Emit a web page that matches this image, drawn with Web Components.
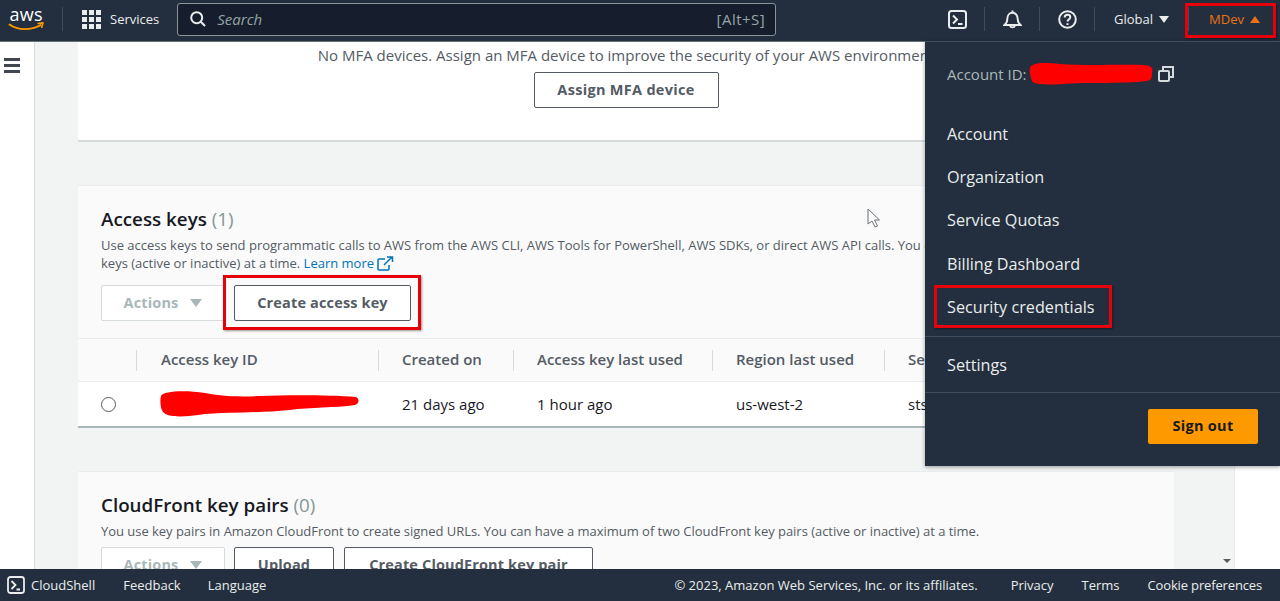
<!DOCTYPE html>
<html lang="en">
<head>
<meta charset="utf-8">
<title>Security credentials</title>
<style>
  html, body { margin: 0; height: 601px; overflow: hidden; background: #fff; }
  body { font-family: "Open Sans", "Liberation Sans", sans-serif; }
</style>
</head>
<body>
<console-page></console-page>

<script>
const FONT = '"Open Sans", "Liberation Sans", sans-serif';

class AwsButton extends HTMLElement {
  constructor() {
    super();
    this.attachShadow({ mode: 'open' });
  }

  connectedCallback() {
    const caret = this.hasAttribute('caret') ? '<span class="caret"></span>' : '';
    this.shadowRoot.innerHTML = `
      <style>
        :host {
          display: inline-flex;
          box-sizing: border-box;
          height: 36px;
          align-items: center;
          justify-content: center;
          gap: 12px;
          padding: 0 10px;
          background: #fff;
          border: 1px solid #545b64;
          border-radius: 2px;
          color: #545b64;
          font: 700 14.5px/20px ${FONT};
          letter-spacing: .15px;
          white-space: nowrap;
        }
        :host([disabled]) { border-color: #d5dbdb; color: #aab7b8; }
        .caret {
          width: 0;
          height: 0;
          border-left: 6px solid transparent;
          border-right: 6px solid transparent;
          border-top: 8px solid currentColor;
        }
      </style>
      <slot></slot>${caret}
    `;
  }
}

class AwsNav extends HTMLElement {
  constructor() {
    super();
    this.attachShadow({ mode: 'open' });
  }

  connectedCallback() {
    this.shadowRoot.innerHTML = `
      <style>
        :host {
          display: flex;
          box-sizing: border-box;
          flex: none;
          height: 42px;
          align-items: center;
          padding-bottom: 3px;
          background: #232f3e;
          border-bottom: 1px solid #687078;
          color: #eaeded;
          font: 400 13px/20px ${FONT};
        }
        .logo { width: 37px; height: 24px; margin-left: 8px; flex: none; }
        .sep { width: 1px; height: 24px; background: #414d5c; flex: none; }
        .services { display: flex; align-items: center; gap: 9px; margin-left: 19px; }
        .search {
          display: flex;
          box-sizing: border-box;
          width: 599px;
          height: 33px;
          margin-left: 18px;
          padding: 0 10px 0 12px;
          align-items: center;
          gap: 11px;
          background: #161e2d;
          border: 1px solid #879596;
          border-radius: 3px;
        }
        .search i { flex: 1; color: #95a5a6; font-size: 15px; }
        .search span { color: #95a5a6; font-size: 15px; letter-spacing: .5px; }
        .tools { display: flex; align-items: center; margin-left: auto; height: 100%; }
        .tool { display: flex; justify-content: center; width: 54px; }
        .global { display: flex; box-sizing: border-box; align-items: center; gap: 6px; width: 93px; padding-left: 19px; }
        .mdev { display: flex; box-sizing: border-box; align-items: center; gap: 6px; width: 91px; padding-left: 20px; color: #ec7211; }
        .up, .down { width: 0; height: 0; border-left: 5px solid transparent; border-right: 5px solid transparent; }
        .up { border-bottom: 7px solid #ec7211; }
        .down { border-top: 7px solid #eaeded; }
      </style>
      <svg class="logo" viewBox="0 0 37 24" aria-hidden="true">
        <path d="M1.500 17.500c4.200 3 10 4.600 15 4.600 5.400 0 11.500-1.400 16-4" fill="none" stroke="#f90" stroke-width="1.900" stroke-linecap="round"/>
        <path d="M29.500 16.500l5.500-.6-1.400 5" fill="none" stroke="#f90" stroke-width="1.600" stroke-linejoin="round"/>
        <text x="1.500" y="14" fill="#fff" font-family="Open Sans, sans-serif" font-size="18" textLength="33">aws</text>
      </svg>
      <span class="sep" style="margin-left:17px"></span>
      <div class="services">
        <svg width="19" height="19" viewBox="0 0 19 19" fill="#eaeded" aria-hidden="true">
          <rect x="0" y="0" width="5" height="5"/><rect x="7" y="0" width="5" height="5"/><rect x="14" y="0" width="5" height="5"/>
          <rect x="0" y="7" width="5" height="5"/><rect x="7" y="7" width="5" height="5"/><rect x="14" y="7" width="5" height="5"/>
          <rect x="0" y="14" width="5" height="5"/><rect x="7" y="14" width="5" height="5"/><rect x="14" y="14" width="5" height="5"/>
        </svg>
        <span>Services</span>
      </div>
      <div class="search">
        <svg width="16" height="16" viewBox="0 0 16 16" fill="none" stroke="#eaeded" stroke-width="2" aria-hidden="true">
          <circle cx="6.700" cy="6.700" r="5.500"/><path d="M10.800 10.800L15 15"/>
        </svg>
        <i>Search</i>
        <span>[Alt+S]</span>
      </div>
      <div class="tools">
        <div class="tool">
          <svg width="19" height="19" viewBox="0 0 19 19" fill="none" stroke="#eaeded" stroke-width="2" aria-hidden="true">
            <rect x="1" y="1" width="17" height="17" rx="2.500"/><path d="M5 5.500l4 4-4 4M10 14h4.500"/>
          </svg>
        </div>
        <span class="sep"></span>
        <div class="tool">
          <svg width="19" height="19" viewBox="0 0 19 19" fill="none" stroke="#eaeded" stroke-width="1.900" aria-hidden="true">
            <path d="M1.500 15h16c-1.800-1.500-2.800-3-2.800-6 0-3.300-2-6.300-5.200-6.300S4.300 5.700 4.300 9c0 3-1 4.500-2.800 6z"/><path d="M7 15.500a2.600 2.600 0 0 0 5 0M9.500 .5v2"/>
          </svg>
        </div>
        <span class="sep"></span>
        <div class="tool">
          <svg width="19" height="19" viewBox="0 0 19 19" fill="none" stroke="#eaeded" stroke-width="2" aria-hidden="true">
            <circle cx="9.500" cy="9.500" r="8.300"/><path d="M6.700 7.400c0-1.600 1.200-2.600 2.800-2.600s2.800 1 2.800 2.400c0 2.200-2.800 2.200-2.800 4.300"/><path d="M9.500 13.200v1.800"/>
          </svg>
        </div>
        <span class="sep"></span>
        <div class="global"><span>Global</span><span class="down"></span></div>
        <span class="sep"></span>
        <div class="mdev"><span>MDev</span><span class="up"></span></div>
      </div>
    `;
  }
}

class AwsFooter extends HTMLElement {
  constructor() {
    super();
    this.attachShadow({ mode: 'open' });
  }

  connectedCallback() {
    this.shadowRoot.innerHTML = `
      <style>
        :host {
          display: flex;
          box-sizing: border-box;
          flex: none;
          height: 32px;
          align-items: center;
          padding: 0 18px 0 7px;
          background: #232f3e;
          color: #eaeded;
          font: 400 13px/20px ${FONT};
          position: relative;
        }
        .shell { display: flex; align-items: center; gap: 6px; margin-right: 28px; }
        .links { display: flex; gap: 27px; }
        .right { display: flex; margin-left: auto; gap: 28px; }
        .copy { margin-right: 5px; }
      </style>
      <div class="shell">
        <svg width="18" height="18" viewBox="0 0 18 18" fill="none" stroke="#eaeded" stroke-width="1.800" aria-hidden="true">
          <rect x="1" y="1" width="16" height="16" rx="2.500"/><path d="M4.500 5l4 4-4 4M9.500 13.500h3.500"/>
        </svg>
        <span>CloudShell</span>
      </div>
      <div class="links"><span>Feedback</span><span>Language</span></div>
      <div class="right">
        <span class="copy">© 2023, Amazon Web Services, Inc. or its affiliates.</span>
        <span>Privacy</span><span>Terms</span><span style="letter-spacing:-.15px">Cookie preferences</span>
      </div>
    `;
  }
}

class KeyTable extends HTMLElement {
  constructor() {
    super();
    this.attachShadow({ mode: 'open' });
  }

  connectedCallback() {
    this.shadowRoot.innerHTML = `
      <style>
        :host {
          display: block;
          margin-top: 17px;
          border-top: 1px solid #eaeded;
          border-bottom: 2px solid #aab7b8;
          color: #16191f;
          font: 400 15px/20px ${FONT};
        }
        .row { display: grid; grid-template-columns: 59px 242px 135px 199px 172px 1fr; }
        .head { height: 42px; background: #fafafa; border-bottom: 1px solid #eaeded; color: #545b64; font-weight: 600; }
        .body { height: 44px; background: #fff; }
        .cell { display: flex; align-items: center; padding-left: 23px; box-sizing: border-box; white-space: nowrap; overflow: hidden; position: relative; }
        .head .cell { padding-bottom: 2px; }
        .head .cell::after { content: ""; position: absolute; right: 0; top: 11px; height: 21px; width: 1px; background: #d5dbdb; }
        .head .cell:last-child::after { display: none; }
        .radio { width: 15px; height: 15px; box-sizing: border-box; border: 1px solid #545b64; border-radius: 50%; background: #fff; }
        .scribble { width: 200px; height: 28px; flex: none; }
      </style>
      <div class="row head">
        <div class="cell"></div>
        <div class="cell" style="padding-left:24px">Access key ID</div>
        <div class="cell">Created on</div>
        <div class="cell">Access key last used</div>
        <div class="cell">Region last used</div>
        <div class="cell">Service last used</div>
      </div>
      <div class="row body">
        <div class="cell"><span class="radio"></span></div>
        <div class="cell">
          <svg class="scribble" viewBox="0 0 200 28" aria-hidden="true">
            <path d="M1 6C3 1 25 0 45 3c15 3 30 4 55 3 30-1 70-1 96 1 4 2 3 7-1 8-20 3-45 2-65 5-30 3-60 2-85 4-20 3-37 4-42-2C0 18 0 10 1 6z" fill="#f00"/>
          </svg>
        </div>
        <div class="cell">21 days ago</div>
        <div class="cell">1 hour ago</div>
        <div class="cell">us-west-2</div>
        <div class="cell">sts.amazonaws.com</div>
      </div>
    `;
  }
}

class IamPanel extends HTMLElement {
  constructor() {
    super();
    this.attachShadow({ mode: 'open' });
  }

  connectedCallback() {
    this.shadowRoot.innerHTML = `
      <style>
        :host {
          display: block;
          background: #fafafa;
          border-top: 1px solid #eaeded;
          margin-bottom: 43px;
          padding-top: 21px;
          color: #545b64;
        }
        h2 { margin: 0 23px; color: #16191f; font: 600 18.800px/24px ${FONT}; }
        h2 span { color: #879596; font-weight: 400; }
        ::slotted(p) { margin: 0 23px; font: 400 13px/18px ${FONT}; color: #545b64; white-space: nowrap; }
        .desc { display: block; margin-top: 5px; }
        .actions { display: flex; gap: 9px; margin: var(--actions-top, 13px) 23px 0; }
      </style>
      <h2><slot name="title"></slot> <span><slot name="count"></slot></span></h2>
      <div class="desc"><slot></slot></div>
      <div class="actions"><slot name="actions"></slot></div>
      <slot name="table"></slot>
    `;
  }
}

class MfaPanel extends HTMLElement {
  constructor() {
    super();
    this.attachShadow({ mode: 'open' });
  }

  connectedCallback() {
    this.shadowRoot.innerHTML = `
      <style>
        :host {
          display: flex;
          box-sizing: border-box;
          height: 100px;
          flex-direction: column;
          align-items: center;
          gap: 7px;
          padding-top: 3px;
          margin-bottom: 43px;
          background: #fff;
          border-bottom: 2px solid #d5dbdb;
          color: #545b64;
          font: 400 15px/20px ${FONT};
          white-space: nowrap;
        }
      </style>
      <span>No MFA devices. Assign an MFA device to improve the security of your AWS environment</span>
      <slot></slot>
    `;
  }
}

class AccountMenu extends HTMLElement {
  constructor() {
    super();
    this.attachShadow({ mode: 'open' });
  }

  connectedCallback() {
    this.shadowRoot.innerHTML = `
      <style>
        :host {
          position: absolute;
          top: 41px;
          right: 0;
          width: 355px;
          height: 425px;
          box-sizing: border-box;
          background: #232f3e;
          border-top: 1px solid #414d5c;
          box-shadow: 0 1px 4px rgba(0, 0, 0, .4);
          color: #eaeded;
          font: 400 16.200px/20px ${FONT};
        }
        .account { display: flex; align-items: center; height: 64px; padding-left: 22px; color: #aab7b8; font-size: 15px; }
        .red { width: 124px; height: 24px; flex: none; margin: 0 5px 0 2px; }
        .group { padding: 6px 0 8px; border-bottom: 1px solid #414d5c; }
        .item { display: flex; align-items: center; height: 43.300px; padding-left: 22px; }
        .item.marked { position: relative; }
        .item.marked::before {
          content: "";
          position: absolute;
          left: 9px;
          top: 0;
          width: 178px;
          height: 43px;
          box-sizing: border-box;
          border: 3px solid #e6000a;
          box-shadow: 1px 1px 2px rgba(0, 0, 0, .4);
        }
        .foot { display: flex; justify-content: flex-end; padding: 16px 22px 0 0; }
        .signout {
          display: flex;
          width: 110px;
          height: 35px;
          align-items: center;
          justify-content: center;
          background: #f90;
          border-radius: 2px;
          color: #16191f;
          font: 700 14.500px/20px ${FONT};
          letter-spacing: .3px;
        }
      </style>
      <div class="account">
        <span>Account ID:</span>
        <svg class="red" viewBox="0 0 124 24" aria-hidden="true">
          <path d="M1 6c1-5 12-6 30-4 30 2 60 0 84 1 9 1 9 4 8 8 0 4 0 8-6 8-20 3-60 1-84 3-12 1-28 1-30-3C2 15 0 10 1 6z" fill="#f00"/>
        </svg>
        <svg width="16" height="16" viewBox="0 0 16 16" fill="none" stroke="#d5dbdb" stroke-width="2" aria-hidden="true">
          <rect x="1" y="5" width="10" height="10" rx="1"/><path d="M5 4V1h10v10h-3"/>
        </svg>
      </div>
      <div class="group">
        <div class="item">Account</div>
        <div class="item">Organization</div>
        <div class="item">Service Quotas</div>
        <div class="item">Billing Dashboard</div>
        <div class="item marked">Security credentials</div>
      </div>
      <div class="group" style="padding:6px 0 5px"><div class="item">Settings</div></div>
      <div class="foot"><div class="signout">Sign out</div></div>
    `;
  }
}

class ConsolePage extends HTMLElement {
  constructor() {
    super();
    this.attachShadow({ mode: 'open' });
  }

  connectedCallback() {
    this.shadowRoot.innerHTML = `
      <style>
        :host {
          display: flex;
          height: 601px;
          flex-direction: column;
          position: relative;
          overflow: hidden;
          font-family: ${FONT};
        }
        .main { display: flex; flex: 1; min-height: 0; overflow: hidden; }
        .rail { flex: none; width: 35px; padding: 16px 0 0 4px; box-sizing: border-box; background: #fff; border-right: 1px solid #d5dbdb; }
        .rail span { display: block; width: 16px; height: 3px; margin-bottom: 3px; background: #414750; }
        .content {
          flex: none;
          width: 1200px;
          box-sizing: border-box;
          padding: 0 60px 0 43px;
          background: #f2f3f3;
          border-right: 1px solid #eaeded;
          position: relative;
          overflow: hidden;
        }
        .scroll-caret {
          position: absolute;
          right: 3px;
          bottom: 6px;
          width: 0;
          height: 0;
          border-left: 4px solid transparent;
          border-right: 4px solid transparent;
          border-top: 4px solid #545b64;
        }
        .mark {
          position: absolute;
          box-sizing: border-box;
          border: 3px solid #e6000a;
          box-shadow: 1px 1px 2px rgba(0, 0, 0, .4);
        }
      </style>
      <aws-nav></aws-nav>
      <div class="main">
        <div class="rail"><span></span><span></span><span></span></div>
        <div class="content">
          <mfa-panel><aws-button style="width:185px;letter-spacing:.3px">Assign MFA device</aws-button></mfa-panel>
          <iam-panel>
            <span slot="title">Access keys</span><span slot="count">(1)</span>
            <p>Use access keys to send programmatic calls to AWS from the AWS CLI, AWS Tools for PowerShell, AWS SDKs, or direct AWS API calls. You can have a maximum of two access</p>
            <p>keys (active or inactive) at a time. <a style="color:#0073bb;text-decoration:none">Learn more
              <svg width="17" height="15" viewBox="0 0 17 15" fill="none" stroke="#0073bb" stroke-width="1.500" style="vertical-align:-3px">
                <path d="M8 3H2a1 1 0 0 0-1 1v9a1 1 0 0 0 1 1h9a1 1 0 0 0 1-1V9M7 9l8-8M10 1h5.500v5"/>
              </svg></a></p>
            <aws-button slot="actions" disabled caret style="width:124px">Actions</aws-button>
            <aws-button slot="actions" style="width:177px">Create access key</aws-button>
            <key-table slot="table"></key-table>
          </iam-panel>
          <iam-panel style="--actions-top:7px">
            <span slot="title">CloudFront key pairs</span><span slot="count">(0)</span>
            <p style="letter-spacing:-.03px">You use key pairs in Amazon CloudFront to create signed URLs. You can have a maximum of two CloudFront key pairs (active or inactive) at a time.</p>
            <aws-button slot="actions" disabled caret style="width:124px">Actions</aws-button>
            <aws-button slot="actions" style="width:100px">Upload</aws-button>
            <aws-button slot="actions" style="width:249px;margin-left:1px">Create CloudFront key pair</aws-button>
          </iam-panel>
          <span class="scroll-caret"></span>
        </div>
      </div>
      <aws-footer></aws-footer>
      <account-menu></account-menu>
      <span class="mark" style="left:1185px;top:3px;width:91px;height:35px"></span>
      <span class="mark" style="left:223px;top:275px;width:198px;height:55px"></span>
      <svg style="position:absolute;left:867px;top:208px" width="14" height="20" viewBox="0 0 14 20" aria-hidden="true">
        <path d="M1 1v15l4-3 3 6 2.500-1-3-6h5z" fill="#fff" stroke="#687078"/>
      </svg>
    `;
  }
}

customElements.define('aws-button', AwsButton);
customElements.define('aws-nav', AwsNav);
customElements.define('aws-footer', AwsFooter);
customElements.define('key-table', KeyTable);
customElements.define('iam-panel', IamPanel);
customElements.define('mfa-panel', MfaPanel);
customElements.define('account-menu', AccountMenu);
customElements.define('console-page', ConsolePage);
</script>
</body>
</html>
